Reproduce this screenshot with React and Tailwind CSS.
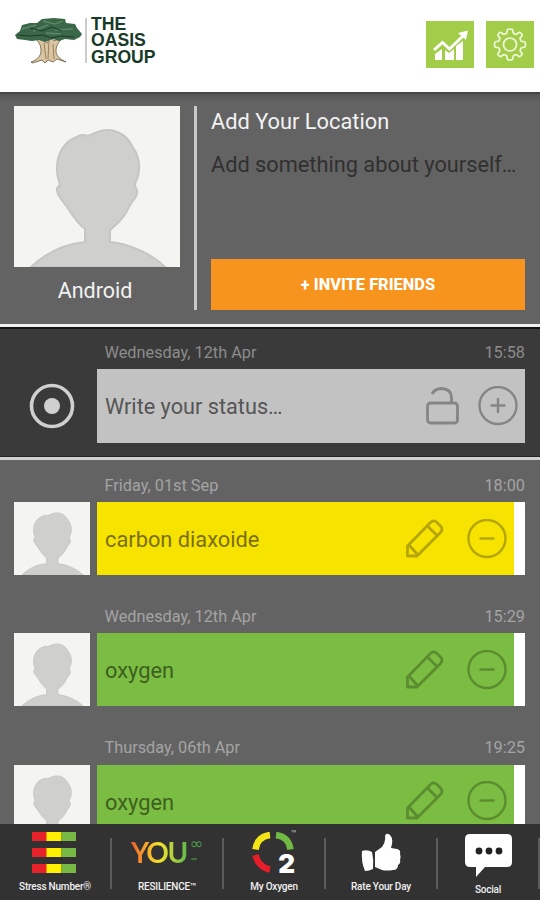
const entries = [
  { date: "Friday, 01st Sep", time: "18:00", text: "carbon diaxoide", color: "bg-[#f6e300]", ink: "text-[#7a6f0a]", icon: "text-[#b5a50a]" },
  { date: "Wednesday, 12th Apr", time: "15:29", text: "oxygen", color: "bg-[#7bbd42]", ink: "text-[#3d5f20]", icon: "text-[#5b8c30]" },
  { date: "Thursday, 06th Apr", time: "19:25", text: "oxygen", color: "bg-[#7bbd42]", ink: "text-[#3d5f20]", icon: "text-[#5b8c30]" },
];

function Tree() {
  return (
    <svg viewBox="0 0 68 48" className="mt-[1px] h-[48px] w-[68px]">
      <path d="M16 45c6-2 10-6 10-11 0-6-2-9-7-14l8 3 5 3 4-6 3 4 10-5c-5 6-8 9-8 15 0 5 4 8 10 11l-9-3-4 3-5-2-3 3-3-3-6 2-4 1z" fill="#d9c6a0" stroke="#6b5940" strokeWidth=".8" />
      <path d="M29 26l2 16M34 24l-1 18M38 27l1 15" stroke="#857052" strokeWidth=".8" fill="none" />
      <path d="M0 18l5-4 2-6 8-2 7 0 5-4 12-1 11 1 1 4 9 1 2 4 5 6-2 3-6 3-9-1-6 2-6-2-8 3-6-2-7 1-7-1-8-1z" fill="#3a6748" />
      <path d="M7 12l14-4M18 14l15-6M40 13l18-1M28 4l12 3 8-3M31 16l15 1" stroke="#5d8766" strokeWidth="1.500" fill="none" />
      <path d="M3 18l12 1 12-1 10 3 8-2 14 1M15 11l12 3 10-4 10 4" stroke="#1c3b28" strokeWidth="1" fill="none" />
    </svg>
  );
}

function ChartIcon() {
  return (
    <svg viewBox="0 0 48 47" className="h-[47px] w-[48px] bg-[#a1cd49]">
      <path d="M9 39v-6l7-5v11zM19 39V29l4 3 5-4v11zM30 39V25l7-5v19z" fill="#fff" />
      <path d="M8 29l8.500-7.500 7 6.500 13.500-13" fill="none" stroke="#fff" strokeWidth="3" />
      <path d="M32 12l10-2.500-2 9.500z" fill="#fff" />
    </svg>
  );
}

function GearIcon() {
  return (
    <svg viewBox="0 0 48 47" className="h-[47px] w-[48px] bg-[#a1cd49]" fill="none" stroke="#f0f8dc" strokeWidth="1.700" strokeLinejoin="round">
      <path transform="translate(24 23.500)" d="M-2.500-15Q0-16 2.500-15L3.500-11 6-10 9.500-12.200Q11.500-11.500 12.300-9.500L10-6 11-3.500 15-2.500Q16 0 15 2.500L11 3.500 10 6 12.300 9.500Q11.500 11.500 9.500 12.200L6 10 3.500 11 2.500 15Q0 16-2.500 15L-3.500 11-6 10-9.500 12.200Q-11.500 11.500-12.300 9.500L-10 6-11 3.500-15 2.500Q-16 0-15-2.500L-11-3.500-10-6-12.300-9.500Q-11.500-11.500-9.500-12.200L-6-10-3.500-11z" />
      <circle cx="24" cy="23.500" r="6.500" />
    </svg>
  );
}

function Avatar({ className }) {
  return (
    <svg viewBox="0 0 166 161" preserveAspectRatio="none" className={className}>
      <path fill="#f4f5f0" d="M0 0h166v161H0z" />
      <path
        d="M17 161C32 147 49 138 71 136V123C63 117 58 109 53 101C49 95 47 94 44 88C42 84 43 80 46 80C46 76 43 72 43 65C42 47 51 35 63 31C66 28 71 29 74 30C82 26 88 24 93 24C105 24 114 31 118 40C124 48 127 58 124 70C123 75 119 78 122 82C125 86 122 92 118 96C116 99 114 103 112 107C107 115 102 119 96 124V136C116 138 138 148 151 161z"
        fill="#cfcfcd"
        stroke="#c6c6c3"
        strokeWidth="2"
      />
    </svg>
  );
}

function Pencil() {
  return (
    <svg viewBox="0 0 40 40" className="h-[40px] w-[40px]" fill="none" stroke="currentColor" strokeWidth="2.800" strokeLinejoin="round">
      <path d="M3.500 37V27L25.500 4.500Q29 0 33 3.500L36 6.500Q40 10 36 14L13 37zM23.500 7l9 9M5 26l9 10" />
    </svg>
  );
}

function CircleSign({ plus }) {
  return (
    <svg viewBox="0 0 40 40" className="h-[40px] w-[40px]" fill="none" stroke="currentColor" strokeWidth="2.400">
      <circle cx="20" cy="19.500" r="18.500" />
      <path d={plus ? "M12.500 19.500h15M20 12v15" : "M12.500 19.500h15"} />
    </svg>
  );
}

function Entry({ date, time, text, color, ink, icon }) {
  return (
    <div className="h-[131.300px] shrink-0 pr-[15px] pl-[14px]">
      <div className="flex h-[42px] items-center justify-between pl-[90.500px] text-[16.300px] text-[#a4a4a4]">
        <span className="mt-[10px]">{date}</span>
        <span className="mt-[10px]">{time}</span>
      </div>
      <div className="flex h-[73px] gap-[7px]">
        <Avatar className="h-[73px] w-[76px]" />
        <div className="flex flex-1 bg-white pr-[11px]">
          <div className={`flex flex-1 items-center pl-[8px] pr-[7px] ${color}`}>
            <span className={`mt-[4px] flex-1 text-[21.800px] ${ink}`}>{text}</span>
            <div className={`flex gap-[23px] ${icon}`}>
              <Pencil />
              <CircleSign />
            </div>
          </div>
        </div>
      </div>
    </div>
  );
}

function NavItem({ width, label, labelClass = "mt-[4px]", children }) {
  return (
    <div className={`flex shrink-0 flex-col items-center ${width}`}>
      <div className="flex h-[50px] items-center justify-center">{children}</div>
      <span className={`whitespace-nowrap text-[10px] leading-[14px] font-medium tracking-[-.2px] text-[#f0f0f0] ${labelClass}`}>{label}</span>
    </div>
  );
}

function Separator() {
  return <div className="mt-[12px] h-[51px] w-[2px] shrink-0 bg-[#5c5c5c]" />;
}

export default function App() {
  return (
    <main className="flex h-[900px] w-[540px] flex-col overflow-hidden bg-[#636363] font-['Roboto',sans-serif]">
      <header className="flex h-[92px] shrink-0 items-start bg-white pl-[15px]">
        <div className="flex pt-[16px]">
          <Tree />
          <div className="ml-[2px] mt-[2px] h-[45px] w-[2px] bg-[#c9cdca]" />
          <p className="ml-[4px] font-['Liberation_Sans',sans-serif] text-[17.600px] leading-[16.300px] font-bold text-[#183b29]">
            THE
            <br />
            OASIS
            <br />
            GROUP
          </p>
        </div>
        <div className="ml-auto flex gap-[12px] pt-[21px] pr-[6px]">
          <ChartIcon />
          <GearIcon />
        </div>
      </header>

      <section className="flex h-[232px] shrink-0 border-t-2 border-[#454545] bg-linear-to-b from-[#555] to-[#636363] to-[8px] pl-[14px]">
        <div className="w-[166px] pt-[12px]">
          <Avatar className="h-[161px] w-[166px]" />
          <p className="mt-[9px] pr-[4px] text-center text-[21.500px] leading-[30px] text-[#f2f2f2]">Android</p>
        </div>
        <div className="mt-[12px] ml-[14px] h-[204px] w-[3px] bg-[#c9c9c9]" />
        <div className="ml-[14px] flex w-[314px] flex-col pt-[13px]">
          <p className="text-[21.800px] leading-[30px] text-[#f2f2f2]">Add Your Location</p>
          <p className="mt-[13px] whitespace-nowrap text-[21.750px] leading-[30px] text-[#303030]">Add something about yourself…</p>
          <button className="mt-[79px] h-[51px] bg-[#f6941e] pt-[2px] text-[16.400px] font-extrabold text-white">+ INVITE FRIENDS</button>
        </div>
      </section>

      <section className="h-[136px] shrink-0 border-t-[3px] border-b-[3px] border-t-[#eee] border-b-[#d0d0d0]">
        <div className="h-full border-t-2 border-b border-t-[#111] border-b-[#222] bg-[#3a3a3a] pr-[15px] pl-[14px]">
          <div className="flex h-[40px] items-center justify-between pl-[90.500px] text-[16.300px] text-[#8c8c8c]">
            <span className="mt-[8px]">Wednesday, 12th Apr</span>
            <span className="mt-[8px]">15:58</span>
          </div>
          <div className="flex h-[74px]">
            <div className="flex w-[83px] items-center pl-[15px]">
              <svg viewBox="0 0 46 46" className="h-[46px] w-[46px]">
                <circle cx="23" cy="23" r="20.500" fill="none" stroke="#d0d0d0" strokeWidth="3.600" />
                <circle cx="23" cy="23" r="8" fill="#d0d0d0" />
              </svg>
            </div>
            <div className="flex flex-1 items-center bg-[#c2c2c2] pr-[7px] pl-[8px] text-[#858585]">
              <span className="mt-[2px] flex-1 text-[21.700px] text-[#555]">Write your status…</span>
              <svg viewBox="0 0 34 40" className="mr-[18px] h-[40px] w-[34px]" fill="none" stroke="currentColor" strokeWidth="2.800">
                <rect x="1.500" y="17" width="30" height="20" rx="3" />
                <path d="M6 8C8 4 12 2.500 16 2.500Q25.500 3 25.500 12v5" />
              </svg>
              <CircleSign plus />
            </div>
          </div>
        </div>
      </section>

      <section className="flex h-[364px] shrink-0 flex-col overflow-hidden">
        {entries.map((entry) => (
          <Entry key={entry.date} {...entry} />
        ))}
      </section>

      <nav className="flex h-[76px] shrink-0 bg-[#323232] pt-[2px]">
        <NavItem width="w-[110px]" label="Stress Number®">
          <svg viewBox="0 0 44 41" className="mt-[3px] mr-[3px] h-[41px] w-[44px]">
            {[0, 16, 32].map((y) => (
              <g key={y}>
                <path fill="#e52229" d={`M0 ${y}h15v9H0z`} />
                <path fill="#fff000" d={`M14.500 ${y}h15v9h-15z`} />
                <path fill="#78b943" d={`M29.500 ${y}h15v9h-15z`} />
              </g>
            ))}
          </svg>
        </NavItem>
        <Separator />
        <NavItem width="w-[110px]" label="RESILIENCE™">
          <div className="mt-[2px] flex font-['Lato',sans-serif]">
            <span className="bg-linear-to-r from-[#f05a2b] via-[#f2e52a] to-[#55b948] bg-clip-text pr-px text-[28px] leading-[30px] font-bold tracking-[-1.500px] text-transparent">YOU</span>
            <span className="ml-[2px] flex flex-col justify-between pt-px pb-px font-['DejaVu_Sans',sans-serif] text-[16px] leading-[12px] text-[#4c9a4a]">
              <span>∞</span>
              <span className="text-[8px] font-bold leading-[8px]">™</span>
            </span>
          </div>
        </NavItem>
        <Separator />
        <NavItem width="w-[100px]" label="My Oxygen">
          <div className="relative mt-[1px] mr-[2px]">
            <svg viewBox="0 0 44 42" className="h-[42px] w-[44px]" fill="none" strokeWidth="6.500">
              <path d="M4.500 18.500C5.500 10 11 5 19 4" stroke="#f5e516" />
              <path d="M25 4C33 5 38.500 10 39.500 18.500" stroke="#70b943" />
              <path d="M4.500 24C6 31 11 37 19 38.500" stroke="#e71d29" />
            </svg>
            <span className="absolute right-0 -bottom-[4px] font-['Inter',sans-serif] text-[26px] leading-[26px] font-black text-white">2</span>
            <span className="absolute -top-px -right-[2px] text-[10px] leading-[8px] text-[#bbb]">™</span>
          </div>
        </NavItem>
        <Separator />
        <NavItem width="w-[110px]" label="Rate Your Day">
          <svg viewBox="0 0 41 40" className="mt-[3px] mr-[1px] h-[40px] w-[41px]" fill="#fff">
            <path d="M2 18Q7 16 12 19Q14 27 13 36Q9 38 5 38Q1 29 2 18z" />
            <path d="M15 19L22 14Q26 9 25 3Q26-1 30 2Q34 6 31 15L37 16Q41 17 40 21Q41 24 40 27Q41 30 38 32Q38 37 33 37Q27 38 22 37L15 34z" />
          </svg>
        </NavItem>
        <Separator />
        <NavItem width="w-[100px]" label="Social" labelClass="mt-[7px]">
          <svg viewBox="0 0 47 43" className="mt-[8px] h-[43px] w-[47px]">
            <path fill="#fff" d="M5 0h37q5 0 5 5v23q0 5-5 5H20l-9 10V33H5q-5 0-5-5V5q0-5 5-5z" />
            <g fill="#222">
              <circle cx="14" cy="17" r="3.400" />
              <circle cx="24" cy="17" r="3.400" />
              <circle cx="34" cy="17" r="3.400" />
            </g>
          </svg>
        </NavItem>
        <Separator />
      </nav>
    </main>
  );
}
